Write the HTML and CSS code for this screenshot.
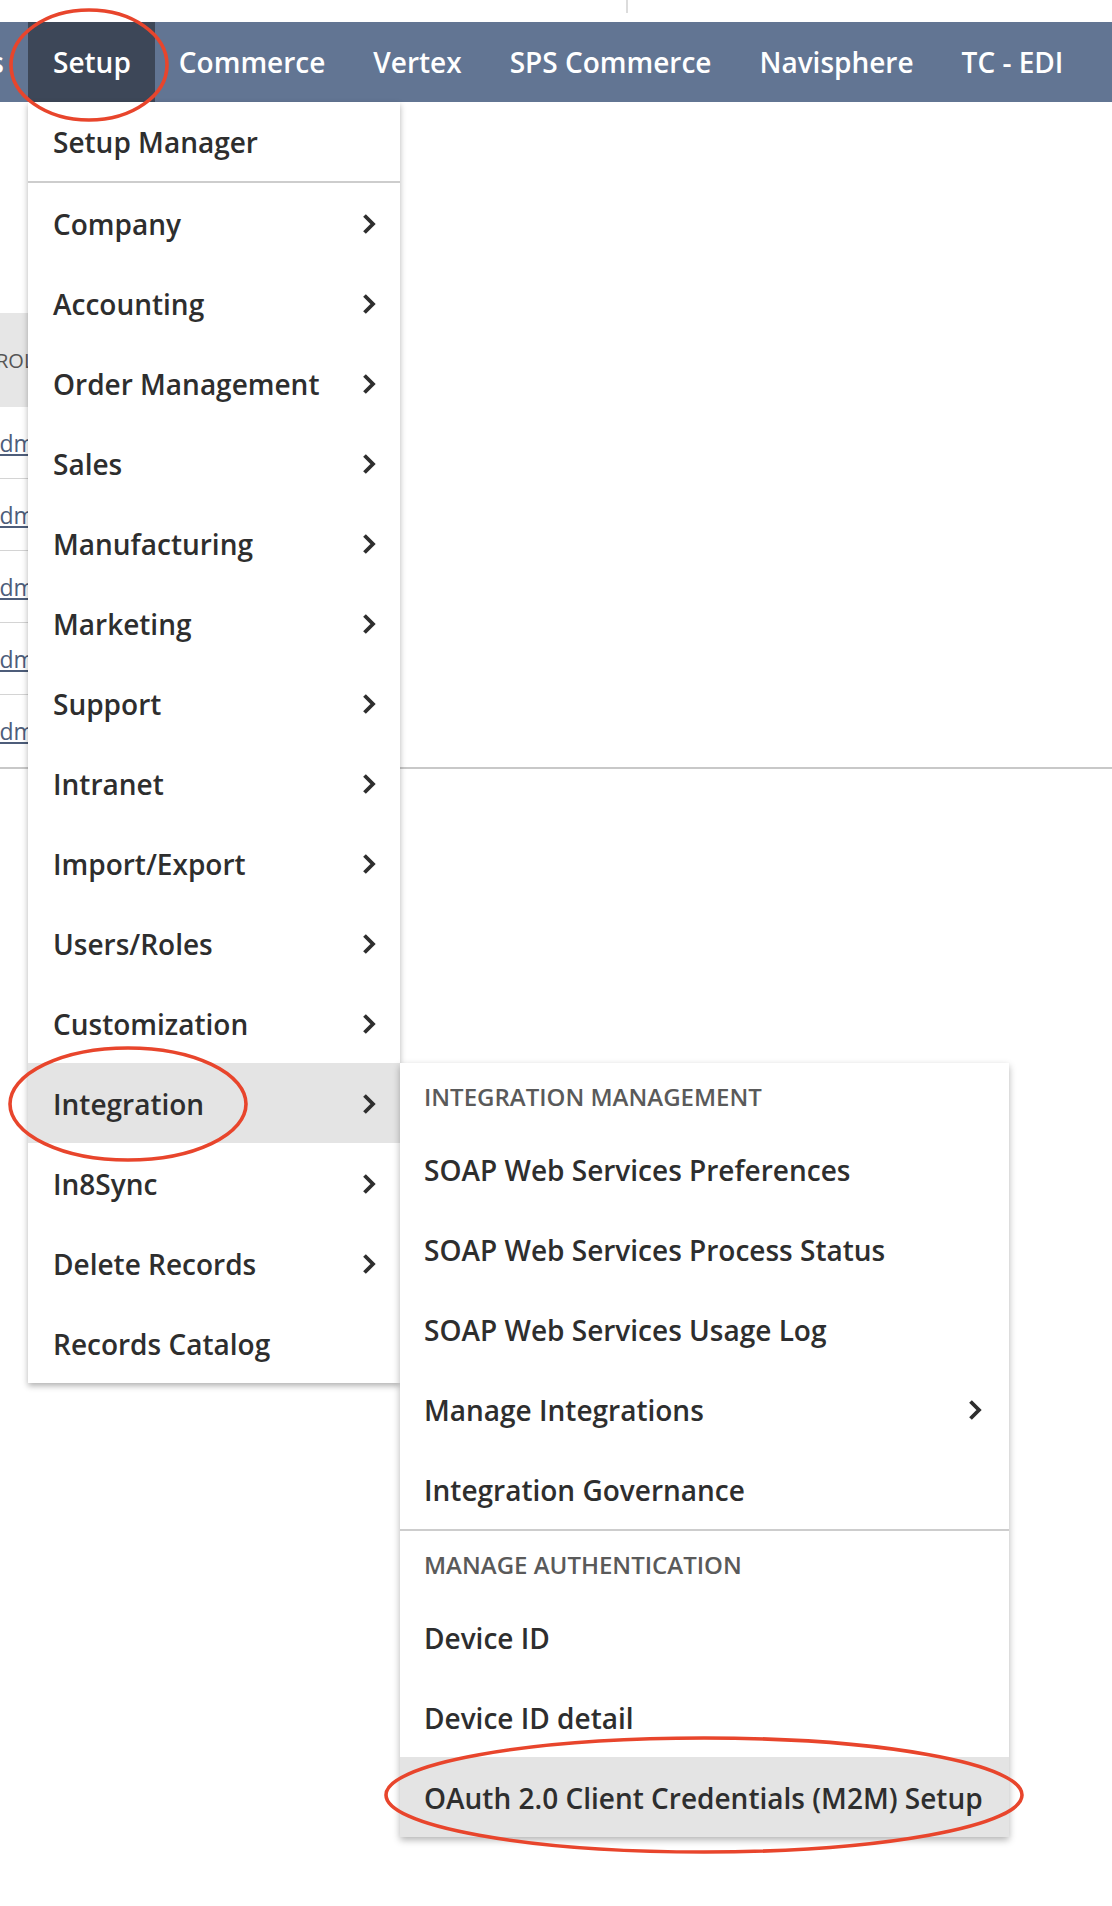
FILE: index.html
```html
<!DOCTYPE html>
<html lang="en">
<head>
    <meta charset="UTF-8">
    <meta name="viewport" content="width=device-width, initial-scale=1.0">
    <title>Setup - Integration</title>
    <link rel="stylesheet" href="styles.css">
</head>
<body>

<div class="top-strip"><span class="top-divider"></span></div>

<div class="navbar">
    <div class="nav-item nav-cut">Lists</div>
    <div class="nav-item nav-open">Setup
        <div class="dropdown">
            <div class="menu-row first">Setup Manager</div>
            <div class="menu-sep"></div>
            <div class="menu-row">Company <svg class="chev" viewBox="0 0 14 22"><path d="M2.5 2.5l8.5 8.5-8.5 8.5"/></svg></div>
            <div class="menu-row">Accounting <svg class="chev" viewBox="0 0 14 22"><path d="M2.5 2.5l8.5 8.5-8.5 8.5"/></svg></div>
            <div class="menu-row">Order Management <svg class="chev" viewBox="0 0 14 22"><path d="M2.5 2.5l8.5 8.5-8.5 8.5"/></svg></div>
            <div class="menu-row">Sales <svg class="chev" viewBox="0 0 14 22"><path d="M2.5 2.5l8.5 8.5-8.5 8.5"/></svg></div>
            <div class="menu-row">Manufacturing <svg class="chev" viewBox="0 0 14 22"><path d="M2.5 2.5l8.5 8.5-8.5 8.5"/></svg></div>
            <div class="menu-row">Marketing <svg class="chev" viewBox="0 0 14 22"><path d="M2.5 2.5l8.5 8.5-8.5 8.5"/></svg></div>
            <div class="menu-row">Support <svg class="chev" viewBox="0 0 14 22"><path d="M2.5 2.5l8.5 8.5-8.5 8.5"/></svg></div>
            <div class="menu-row">Intranet <svg class="chev" viewBox="0 0 14 22"><path d="M2.5 2.5l8.5 8.5-8.5 8.5"/></svg></div>
            <div class="menu-row">Import/Export <svg class="chev" viewBox="0 0 14 22"><path d="M2.5 2.5l8.5 8.5-8.5 8.5"/></svg></div>
            <div class="menu-row">Users/Roles <svg class="chev" viewBox="0 0 14 22"><path d="M2.5 2.5l8.5 8.5-8.5 8.5"/></svg></div>
            <div class="menu-row">Customization <svg class="chev" viewBox="0 0 14 22"><path d="M2.5 2.5l8.5 8.5-8.5 8.5"/></svg></div>
            <div class="menu-row active">Integration <svg class="chev" viewBox="0 0 14 22"><path d="M2.5 2.5l8.5 8.5-8.5 8.5"/></svg>
                <div class="submenu">
                    <div class="sub-head">Integration Management</div>
                    <div class="sub-row">SOAP Web Services Preferences</div>
                    <div class="sub-row">SOAP Web Services Process Status</div>
                    <div class="sub-row">SOAP Web Services Usage Log</div>
                    <div class="sub-row">Manage Integrations <svg class="chev" viewBox="0 0 14 22"><path d="M2.5 2.5l8.5 8.5-8.5 8.5"/></svg></div>
                    <div class="sub-row">Integration Governance</div>
                    <div class="menu-sep"></div>
                    <div class="sub-head">Manage Authentication</div>
                    <div class="sub-row">Device ID</div>
                    <div class="sub-row">Device ID detail</div>
                    <div class="sub-row active">OAuth 2.0 Client Credentials (M2M) Setup</div>
                </div>
            </div>
            <div class="menu-row">In8Sync <svg class="chev" viewBox="0 0 14 22"><path d="M2.5 2.5l8.5 8.5-8.5 8.5"/></svg></div>
            <div class="menu-row">Delete Records <svg class="chev" viewBox="0 0 14 22"><path d="M2.5 2.5l8.5 8.5-8.5 8.5"/></svg></div>
            <div class="menu-row">Records Catalog</div>
        </div>
    </div>
    <div class="nav-item">Commerce</div>
    <div class="nav-item">Vertex</div>
    <div class="nav-item">SPS Commerce</div>
    <div class="nav-item">Navisphere</div>
    <div class="nav-item">TC - EDI</div>
</div>

<div class="page">
    <div class="portlet">
        <div class="roles">
            <div class="roles-head">Role</div>
            <div class="roles-row"><a href="#">Administrator</a></div>
            <div class="roles-row"><a href="#">Administrator</a></div>
            <div class="roles-row"><a href="#">Administrator</a></div>
            <div class="roles-row"><a href="#">Administrator</a></div>
            <div class="roles-row"><a href="#">Administrator</a></div>
        </div>
    </div>
</div>

<!-- red annotation marks drawn over the screenshot -->
<svg class="marks" width="1112" height="1906" viewBox="0 0 1112 1906">
    <ellipse cx="89" cy="65" rx="78" ry="55"/>
    <ellipse cx="128" cy="1104" rx="118" ry="56"/>
    <ellipse cx="704" cy="1795" rx="318" ry="57"/>
</svg>

</body>
</html>
```

FILE: styles.css
```css
body {
    margin: 0;
    font-family: "Open Sans", "Noto Sans", sans-serif;
    background: #fff;
    color: #2e2e2e;
    position: relative;
    min-height: 1906px;
}
.top-strip {
    height: 22px;
    padding-left: 626px;
}
.top-divider {
    display: block;
    width: 2px;
    height: 13px;
    background: #dcdcdc;
}
.navbar {
    height: 80px;
    display: flex;
    background: #627593;
    color: #fff;
    font-size: 28px;
    font-weight: 600;
    white-space: nowrap;
}
.nav-item {
    display: flex;
    align-items: center;
    flex-shrink: 0;
    padding: 0 24px;
}
.nav-cut {
    width: 28px;
    box-sizing: border-box;
    padding: 0 24px 0 0;
    overflow: hidden;
    justify-content: flex-end;
}
.nav-open {
    position: relative;
    background: #3d4758;
    padding-left: 25px;
}

/* dropdown */
.dropdown {
    position: absolute;
    top: 100%;
    left: 0;
    width: 372px;
    background: #fff;
    color: #2e2e2e;
    box-shadow: 0 3px 6px rgba(0, 0, 0, 0.3);
    z-index: 10;
}
.menu-row {
    position: relative;
    height: 80px;
    display: flex;
    align-items: center;
    justify-content: space-between;
    padding: 1px 24px 0 25px;
    box-sizing: border-box;
}
.menu-row.first {
    height: 79px;
}
.menu-row.active,
.sub-row.active {
    background: #e4e4e4;
}
.menu-sep {
    height: 2px;
    background: #cdcdcd;
}
.chev {
    width: 14px;
    height: 22px;
    fill: none;
    stroke: #2e2e2e;
    stroke-width: 3.8;
}

/* flyout */
.submenu {
    position: absolute;
    top: 0;
    left: 100%;
    width: 609px;
    background: #fff;
    box-shadow: 0 3px 7px rgba(0, 0, 0, 0.3);
    z-index: 11;
}
.sub-head {
    height: 66px;
    display: flex;
    align-items: center;
    padding-left: 24px;
    font-size: 24px;
    font-weight: 600;
    color: #5a5a5a;
    text-transform: uppercase;
}
.sub-row {
    height: 80px;
    display: flex;
    align-items: center;
    justify-content: space-between;
    padding: 1px 27px 0 24px;
    box-sizing: border-box;
}

/* page behind the menu */
.page {
    padding-top: 211px;
}
.portlet {
    border-bottom: 2px solid #c8c8c8;
}
.roles {
    width: 380px;
    margin-left: -17px;
}
.roles-head {
    height: 94px;
    display: flex;
    align-items: center;
    padding-left: 13px;
    background: #e6e6e6;
    color: #555;
    font-size: 20px;
    text-transform: uppercase;
}
.roles-row {
    height: 71px;
    display: flex;
    align-items: center;
    padding-left: 2px;
    font-size: 23px;
    border-bottom: 1px solid #d4d4d4;
}
.roles-row:last-child {
    border-bottom: none;
    height: 72px;
}
.roles-row a {
    color: #4d5d7a;
}

.marks {
    position: absolute;
    top: 0;
    left: 0;
    pointer-events: none;
    z-index: 20;
}
.marks ellipse {
    fill: none;
    stroke: #e8452c;
    stroke-width: 3.6;
}
```
